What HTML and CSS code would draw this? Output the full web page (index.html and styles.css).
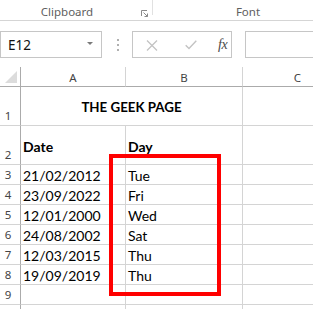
FILE: index.html
```html
<!DOCTYPE html>
<html>
<head>
<meta charset="utf-8">
<link rel="stylesheet" href="styles.css">
</head>
<body>
<div class="ribbon">
  <div class="group clip">
    <span class="glabel">Clipboard</span>
    <svg class="launcher" width="7" height="7" viewBox="0 0 7 7"><path d="M0.5 6V0.5H6" fill="none" stroke="#8a8a8a" stroke-width="1"/><path d="M2.5 2.5L6.5 6.5M6.5 3.5V6.5H3.5" fill="none" stroke="#8a8a8a" stroke-width="1"/></svg>
  </div>
  <div class="group font">
    <span class="glabel">Font</span>
  </div>
</div>
<div class="fbar">
  <div class="namebox">
    <span class="nbtext">E12</span>
    <span class="ddarrow"></span>
  </div>
  <div class="dots"><i></i><i></i><i></i></div>
  <div class="fbtns">
    <svg class="xicon" width="12" height="11" viewBox="0 0 12 11"><path d="M1 0.5L11 10.5M11 0.5L1 10.5" stroke="#c3c3c3" stroke-width="1.3" fill="none"/></svg>
    <svg class="check" width="12" height="10" viewBox="0 0 12 10"><path d="M0.7 5.2L4 8.6L11.3 0.8" stroke="#c3c3c3" stroke-width="1.4" fill="none"/></svg>
    <span class="fx">fx</span>
  </div>
  <div class="finput"></div>
</div>
<div class="sheet">
  <div class="corner"><svg width="12" height="12" viewBox="0 0 12 12"><path d="M12 0V12H0Z" fill="#dcdcdc"/></svg></div>
  <div class="ch">A</div>
  <div class="ch">B</div>
  <div class="ch chc">C</div>

  <div class="rh tall">1</div>
  <div class="c merged title">THE GEEK PAGE</div>
  <div class="c cc"></div>

  <div class="rh tall">2</div>
  <div class="c hd">Date</div>
  <div class="c hd">Day</div>
  <div class="c cc"></div>

  <div class="rh">3</div><div class="c">21/02/2012</div><div class="c">Tue</div><div class="c cc"></div>
  <div class="rh">4</div><div class="c">23/09/2022</div><div class="c">Fri</div><div class="c cc"></div>
  <div class="rh">5</div><div class="c">12/01/2000</div><div class="c">Wed</div><div class="c cc"></div>
  <div class="rh">6</div><div class="c">24/08/2002</div><div class="c">Sat</div><div class="c cc"></div>
  <div class="rh">7</div><div class="c">12/03/2015</div><div class="c">Thu</div><div class="c cc"></div>
  <div class="rh">8</div><div class="c">19/09/2019</div><div class="c">Thu</div><div class="c cc"></div>
  <div class="rh">9</div><div class="c"></div><div class="c"></div><div class="c cc"></div>
  <div class="rh"></div><div class="c"></div><div class="c"></div><div class="c cc"></div>

  <div class="redbox"></div>
</div>
</body>
</html>
```

FILE: styles.css
```css
html, body {
  margin: 0;
  padding: 0;
  background: #ffffff;
}
body {
  width: 313px;
  height: 309px;
  overflow: hidden;
  position: relative;
  font-family: Lato, "Open Sans", sans-serif;
}

/* Ribbon strip */
.ribbon {
  display: flex;
  height: 20px;
  border-bottom: 1px solid #d5d5d5;
}
.group {
  position: relative;
  display: flex;
  justify-content: center;
  align-items: center;
  box-sizing: border-box;
}
.clip {
  width: 153px;
  padding-right: 19px;
}
.clip::after {
  content: "";
  position: absolute;
  right: 0;
  top: 0;
  width: 1px;
  height: 15px;
  background: #e1e1e1;
}
.font {
  width: 160px;
  padding-left: 30px;
}
.glabel {
  font-family: "Noto Sans", "Open Sans", sans-serif;
  font-size: 11.5px;
  color: #5e5e5e;
  line-height: 20px;
  padding-top: 3px;
}
.launcher {
  position: absolute;
  left: 141px;
  top: 10px;
}

/* Formula bar */
.fbar {
  display: flex;
  margin-top: 10px;
  height: 27px;
}
.namebox {
  width: 102px;
  box-sizing: border-box;
  border: 1px solid #c6c6c6;
  display: flex;
  align-items: center;
  justify-content: space-between;
  padding: 0 8px 0 7px;
}
.nbtext {
  font-family: "Noto Sans", "Open Sans", sans-serif;
  font-size: 13.5px;
  color: #111;
  padding-top: 1px;
}
.ddarrow {
  width: 0;
  height: 0;
  border-left: 3px solid transparent;
  border-right: 3px solid transparent;
  border-top: 3px solid #7a7a7a;
  margin-top: -2px;
}
.dots {
  width: 30px;
  display: flex;
  flex-direction: column;
  align-items: center;
  justify-content: center;
  gap: 3px;
  padding-left: 1px;
  box-sizing: border-box;
}
.dots i {
  display: block;
  width: 2px;
  height: 2px;
  background: #b0b0b0;
}
.fbtns {
  width: 100px;
  box-sizing: border-box;
  border: 1px solid #c6c6c6;
  display: flex;
  align-items: center;
  padding-left: 13px;
}
.xicon { margin-top: 1px; }
.check { margin-left: 27px; margin-top: 1px; }
.fx {
  margin-left: 21px;
  font-family: "Liberation Serif", serif;
  font-style: italic;
  font-size: 14px;
  color: #4a4a4a;
  letter-spacing: -0.5px;
}
.finput {
  margin-left: 13px;
  flex: 1;
  border: 1px solid #c6c6c6;
  border-right: none;
}

/* Sheet grid */
.sheet {
  margin-top: 9px;
  display: grid;
  grid-template-columns: 21px 105px 117px 70px;
  grid-template-rows: 20px 39px 39px repeat(7, 20px) 5px;
  font-size: 14px;
  color: #000;
}
.sheet > div {
  box-sizing: border-box;
  border-right: 1px solid #d4d4d4;
  border-bottom: 1px solid #d4d4d4;
}
.corner {
  display: flex;
  align-items: flex-end;
  justify-content: flex-end;
  padding: 0 3px 3px 0;
  border-right-color: #ababab !important;
  border-bottom-color: #ababab !important;
}
.corner svg { display: block; }
.ch {
  border-bottom-color: #ababab !important;
  display: flex;
  align-items: center;
  justify-content: center;
  font-family: "Noto Sans", "Open Sans", sans-serif;
  font-size: 11.5px;
  color: #444;
  padding-top: 1px;
}
.chc {
  padding-left: 39px;
  border-right: none !important;
}
.rh {
  border-right-color: #ababab !important;
  display: flex;
  align-items: flex-end;
  justify-content: center;
  padding-right: 4px;
  padding-bottom: 1px;
  font-family: "Noto Sans", "Open Sans", sans-serif;
  font-size: 11.5px;
  line-height: 16px;
  color: #444;
}
.c {
  display: flex;
  align-items: center;
  padding-left: 2px;
  padding-top: 2px;
  white-space: nowrap;
}
.sheet > .cc { border-right: none; }
.merged {
  grid-column: span 2;
  justify-content: center;
  padding-left: 0;
}
.title { font-weight: 700; font-size: 13.3px; }
.hd { font-weight: 700; }

.redbox {
  position: absolute;
  left: 109px;
  top: 154px;
  width: 112px;
  height: 142px;
  box-sizing: border-box;
  border: 4px solid #ff0000 !important;
}
```
